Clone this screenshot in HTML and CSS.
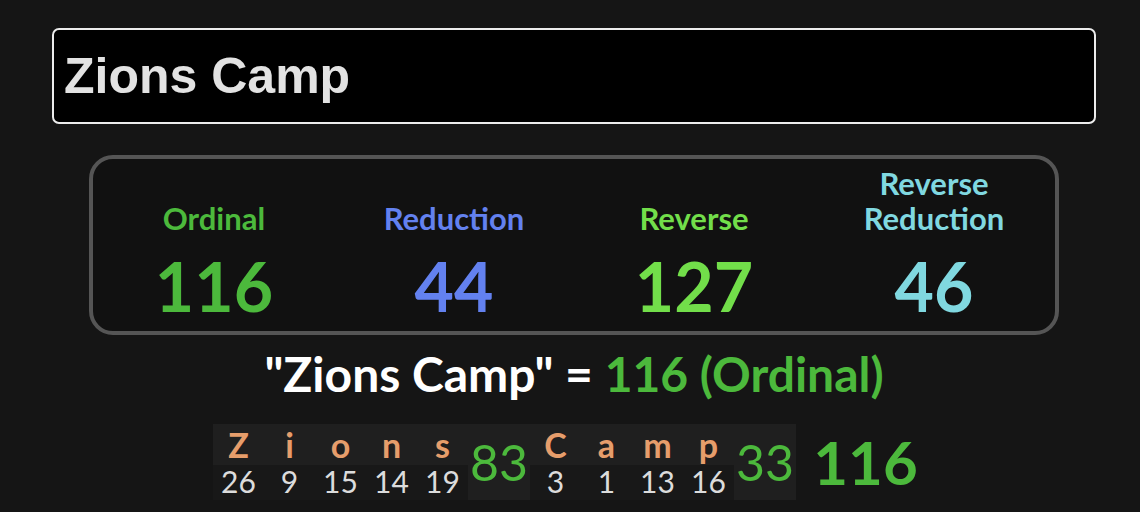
FILE: index.html
```html
<!DOCTYPE html>
<html lang="en">
<head>
<meta charset="utf-8">
<title>Zions Camp</title>
<link rel="stylesheet" href="styles.css">
</head>
<body>
<main class="page">
  <div class="phrase-input">Zions Camp</div>

  <section class="results">
    <div class="cipher">
      <div class="cipher-label green">Ordinal</div>
      <div class="cipher-value green">116</div>
    </div>
    <div class="cipher">
      <div class="cipher-label blue">Reduction</div>
      <div class="cipher-value blue">44</div>
    </div>
    <div class="cipher">
      <div class="cipher-label lime">Reverse</div>
      <div class="cipher-value lime">127</div>
    </div>
    <div class="cipher">
      <div class="cipher-label cyan">Reverse<br>Reduction</div>
      <div class="cipher-value cyan">46</div>
    </div>
  </section>

  <p class="summary">"Zions Camp" = <span class="green">116 (Ordinal)</span></p>

  <div class="breakdown">
    <div class="word">
      <div class="lcell"><span class="letter">Z</span><span class="num">26</span></div>
      <div class="lcell"><span class="letter">i</span><span class="num">9</span></div>
      <div class="lcell"><span class="letter">o</span><span class="num">15</span></div>
      <div class="lcell"><span class="letter">n</span><span class="num">14</span></div>
      <div class="lcell"><span class="letter">s</span><span class="num">19</span></div>
    </div>
    <div class="word-total">83</div>
    <div class="word">
      <div class="lcell"><span class="letter">C</span><span class="num">3</span></div>
      <div class="lcell"><span class="letter">a</span><span class="num">1</span></div>
      <div class="lcell"><span class="letter">m</span><span class="num">13</span></div>
      <div class="lcell"><span class="letter">p</span><span class="num">16</span></div>
    </div>
    <div class="word-total">33</div>
    <div class="grand-total">116</div>
  </div>
</main>
</body>
</html>
```

FILE: styles.css
```css
* { box-sizing: border-box; }

html, body {
  margin: 0;
  padding: 0;
  background: #151515;
}

body {
  font-family: "Lato", "Noto Sans", sans-serif;
  color: #fff;
  width: 1140px;
  height: 512px;
  overflow: hidden;
}

.page {
  display: flex;
  flex-direction: column;
  align-items: center;
  padding-top: 28px;
  padding-left: 8px;
}

.phrase-input {
  align-self: flex-start;
  margin-left: 44px;
  width: 1044px;
  height: 96px;
  background: #000;
  border: 2px solid #ececec;
  border-radius: 7px;
  padding-left: 10px;
  display: flex;
  align-items: center;
  font-family: "Liberation Sans", Arial, sans-serif;
  font-weight: bold;
  font-size: 50px;
  color: #e2e2e2;
}

.results {
  margin-top: 31px;
  width: 970px;
  height: 180px;
  border: 4px solid #555;
  border-radius: 24px;
  background: #111;
  display: grid;
  grid-template-columns: repeat(4, 1fr);
  align-items: end;
  padding: 7px 1px 6px;
}

.cipher {
  display: flex;
  flex-direction: column;
  align-items: center;
  text-align: center;
}

.cipher-label {
  font-weight: bold;
  font-size: 31px;
  line-height: 35px;
}

.cipher-value {
  margin-top: 10px;
  font-weight: bold;
  font-size: 68px;
  line-height: 80px;
}

.green { color: #4cb93c; }
.blue { color: #6381ef; }
.lime { color: #72de4a; }
.cyan { color: #80d8e0; }

.summary {
  margin: 13px 0 0;
  font-weight: bold;
  font-size: 48px;
  line-height: 52px;
  color: #fff;
}

.breakdown {
  margin-top: 24px;
  display: flex;
  align-items: stretch;
  height: 76px;
}

.word {
  display: flex;
}

.lcell {
  width: 51px;
  display: flex;
  flex-direction: column;
  align-items: stretch;
  text-align: center;
}

.letter {
  height: 41px;
  line-height: 41px;
  background: #1f1f1f;
  color: #e69d6b;
  font-weight: bold;
  font-size: 34px;
}

.num {
  height: 35px;
  line-height: 33px;
  background: #181818;
  color: #dcdcdc;
  font-size: 30px;
}

.word-total {
  width: 62px;
  background: #1f1f1f;
  color: #4cb93c;
  font-size: 50px;
  display: flex;
  align-items: center;
  justify-content: center;
}

.grand-total {
  width: 139px;
  color: #4cb93c;
  font-weight: bold;
  font-size: 60px;
  display: flex;
  align-items: center;
  justify-content: center;
}
```
